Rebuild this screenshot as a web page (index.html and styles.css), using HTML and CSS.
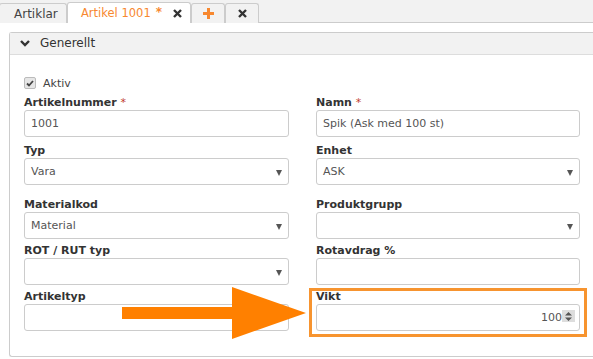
FILE: index.html
```html
<!DOCTYPE html>
<html lang="sv">
<head>
    <meta charset="UTF-8">
    <title>Artikel 1001</title>
    <link rel="stylesheet" href="styles.css">
</head>
<body>
    <div class="tabbar">
        <div class="tab tab-first">Artiklar</div>
        <div class="tab tab-active">Artikel 1001<span class="tab-star">*</span>
            <svg class="tab-close" width="9" height="9" viewBox="0 0 9 9"><path d="M1 1 L8 8 M8 1 L1 8" stroke="#333" stroke-width="2.4"/></svg>
        </div>
        <div class="tab tab-icon">
            <svg width="11" height="11" viewBox="0 0 11 11"><path d="M5.5 0 V11 M0 5.5 H11" stroke="#f7882f" stroke-width="3"/></svg>
        </div>
        <div class="tab tab-icon">
            <svg width="9" height="9" viewBox="0 0 9 9"><path d="M1 1 L8 8 M8 1 L1 8" stroke="#333" stroke-width="2.4"/></svg>
        </div>
    </div>

    <div class="panel">
        <div class="panel-header">
            <svg class="chevron" width="10" height="7" viewBox="0 0 10 7"><path d="M1 1 L5 5 L9 1" fill="none" stroke="#333" stroke-width="2.4"/></svg>
            Generellt
        </div>
        <div class="panel-body">
            <label class="check-row">
                <span class="checkbox"><svg width="8" height="7" viewBox="0 0 8 7"><path d="M1 3.5 L3 5.5 L7 1" fill="none" stroke="#444" stroke-width="1.8"/></svg></span>
                Aktiv
            </label>

            <div class="form-grid">
                <div class="field row-1">
                    <div class="field-label">Artikelnummer <span class="req">*</span></div>
                    <div class="input">1001</div>
                </div>
                <div class="field row-1">
                    <div class="field-label">Namn <span class="req">*</span></div>
                    <div class="input">Spik (Ask med 100 st)</div>
                </div>

                <div class="field row-2">
                    <div class="field-label">Typ</div>
                    <div class="input select">Vara</div>
                </div>
                <div class="field row-2">
                    <div class="field-label">Enhet</div>
                    <div class="input select">ASK</div>
                </div>

                <div class="field">
                    <div class="field-label">Materialkod</div>
                    <div class="input select">Material</div>
                </div>
                <div class="field">
                    <div class="field-label">Produktgrupp</div>
                    <div class="input select"></div>
                </div>

                <div class="field">
                    <div class="field-label">ROT / RUT typ</div>
                    <div class="input select"></div>
                </div>
                <div class="field">
                    <div class="field-label">Rotavdrag %</div>
                    <div class="input"></div>
                </div>

                <div class="field">
                    <div class="field-label">Artikeltyp</div>
                    <div class="input"></div>
                </div>
                <div class="field">
                    <div class="field-label">Vikt</div>
                    <div class="input number">100<span class="spinner"><svg width="7" height="9" viewBox="0 0 7 9"><path d="M3.5 0 L7 3.5 L0 3.5 Z M0 5.5 L7 5.5 L3.5 9 Z" fill="#555"/></svg></span></div>
                </div>
            </div>
        </div>
    </div>

    <!-- markering -->
    <div class="highlight"></div>
    <svg class="arrow" width="186" height="54" viewBox="0 0 186 54">
        <path d="M0 20 L110 20 L110 0 L184 26 L110 52 L110 32 L0 32 Z" fill="#ff8000"/>
    </svg>
</body>
</html>
```

FILE: styles.css
```css
body {
    margin: 0;
    font-family: "DejaVu Sans", Verdana, sans-serif;
    font-size: 11px;
    color: #333;
    background: #fff;
    overflow: hidden;
    position: relative;
    height: 359px;
}

.tabbar {
    background: #f2f2f2;
    height: 22px;
    border-bottom: 1px solid #ccc;
    display: flex;
    align-items: flex-end;
}
.tab {
    flex-shrink: 0;
    height: 20px;
    border: 1px solid #ccc;
    border-bottom: none;
    border-radius: 3px 3px 0 0;
    background: #f2f2f2;
    color: #444;
    font-size: 12px;
    margin-bottom: -1px;
    box-sizing: border-box;
    display: flex;
    align-items: center;
}
.tab-first {
    width: 68px;
    margin-left: -1px;
    padding-left: 14px;
}
.tab-active {
    background: #fff;
    color: #f7882f;
    font-size: 11.5px;
    height: 21px;
    width: 124px;
    padding-left: 13px;
    white-space: nowrap;
}
.tab-star {
    font-weight: bold;
    font-size: 12px;
    margin-left: 5px;
    align-self: flex-start;
    margin-top: 2px;
}
.tab-close {
    margin-left: 11px;
}
.tab-icon {
    width: 34px;
    justify-content: center;
}

.panel {
    margin: 9px 0 0 9px;
    border: 1px solid #ccc;
    border-right: none;
    border-radius: 3px 0 0 3px;
    height: 323px;
}
.panel-header {
    background: #f2f2f2;
    height: 21px;
    line-height: 21px;
    border-bottom: 1px solid #ddd;
    padding-left: 10px;
    display: flex;
    align-items: center;
    gap: 10px;
    font-size: 12px;
}
.panel-body {
    padding: 21px 0 0 14px;
}

.check-row {
    display: flex;
    align-items: center;
    gap: 7px;
    height: 14px;
    color: #444;
}
.checkbox {
    width: 10px;
    height: 10px;
    border: 1px solid #bbb;
    border-radius: 2px;
    background: #e6e6e6;
    display: flex;
    align-items: center;
    justify-content: center;
}

.form-grid {
    display: grid;
    grid-template-columns: 265px 264px;
    column-gap: 27px;
    row-gap: 4px;
    margin-top: 5px;
}
.field.row-1 {
    margin-bottom: 2px;
}
.field.row-2 {
    margin-bottom: 8px;
}
.field-label {
    font-weight: bold;
    height: 15px;
    line-height: 15px;
    color: #333;
}
.req {
    color: #c0392b;
    font-weight: normal;
}
.input {
    height: 27px;
    box-sizing: border-box;
    border: 1px solid #ccc;
    border-radius: 3px;
    padding: 0 6px;
    line-height: 25px;
    color: #555;
    position: relative;
}
.select::after {
    content: "";
    position: absolute;
    right: 6px;
    top: 11px;
    border-left: 3px solid transparent;
    border-right: 3px solid transparent;
    border-top: 6px solid #555;
}
.number {
    text-align: right;
    padding-right: 17px;
}
.spinner {
    position: absolute;
    right: 4px;
    top: 5px;
    width: 13px;
    height: 12px;
    background: #ddd;
    display: flex;
    align-items: center;
    justify-content: center;
}

.highlight {
    position: absolute;
    left: 309px;
    top: 288px;
    width: 272px;
    height: 43px;
    border: 3px solid #f7942f;
}
.arrow {
    position: absolute;
    left: 122px;
    top: 287px;
}
```
